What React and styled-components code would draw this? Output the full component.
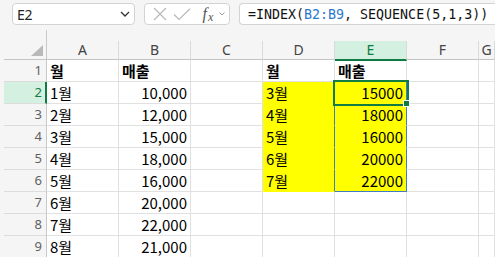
import React from 'react';
import styled, { createGlobalStyle, css } from 'styled-components';

const GREEN = '#107c41';
const SPILL = '#3f7cc4';
const YELLOW = '#ffff00';
const GRID = '#e1e1e1';

const GlobalStyle = createGlobalStyle`
  html, body { margin: 0; padding: 0; background: #f5f5f5; }
  body { font-family: "Noto Sans", sans-serif; }
`;

const columns = ['A', 'B', 'C', 'D', 'E', 'F', 'G'];

const source = [
  ['1월', '10,000'], ['2월', '12,000'], ['3월', '15,000'], ['4월', '18,000'],
  ['5월', '16,000'], ['6월', '20,000'], ['7월', '22,000'], ['8월', '21,000'],
];

const spill = [['3월', '15000'], ['4월', '18000'], ['5월', '16000'], ['6월', '20000'], ['7월', '22000']];

const App = () => {
  const rows = [];
  rows.push({ A: { v: '월', bold: true }, B: { v: '매출', bold: true }, D: { v: '월', bold: true }, E: { v: '매출', bold: true } });
  source.forEach(([m, s], i) => {
    const r = { A: { v: m }, B: { v: s, num: true } };
    if (spill[i]) {
      r.D = { v: spill[i][0], fill: YELLOW, edge: true };
      r.E = { v: spill[i][1], num: true, fill: YELLOW, edge: true, last: i === spill.length - 1, active: i === 0 };
    }
    rows.push(r);
  });

  return (
    <Window>
      <GlobalStyle />
      <Toolbar>
        <NameBox>
          <span>E2</span>
          <svg width="10" height="6" viewBox="0 0 10 6">
            <polyline points="1,1 5,5 9,1" fill="none" stroke="#333" strokeWidth="1.3" />
          </svg>
        </NameBox>
        <ActionBox>
          <svg width="14" height="14" viewBox="0 0 14 14">
            <path d="M1 1 L13 13 M13 1 L1 13" stroke="#b8b8b8" strokeWidth="1.2" />
          </svg>
          <svg width="18" height="13" viewBox="0 0 18 13">
            <polyline points="1,6.5 6,11.5 17,0.8" fill="none" stroke="#b8b8b8" strokeWidth="1.2" />
          </svg>
          <Fx>
            <FxF>f</FxF><FxX>x</FxX>
          </Fx>
          <svg width="6" height="4" viewBox="0 0 6 4">
            <polyline points="0.5,0.5 3,3 5.5,0.5" fill="none" stroke="#999" strokeWidth="1" />
          </svg>
        </ActionBox>
        <FormulaBox>
          =INDEX(<Ref>B2:B9</Ref>, SEQUENCE(5,1,3))
        </FormulaBox>
      </Toolbar>

      <Sheet>
        <Corner>
          <Triangle />
        </Corner>
        {columns.map((c) => (
          <ColHead key={c}>
            <ColLabel $selected={c === 'E'}>{c}</ColLabel>
          </ColHead>
        ))}
        {rows.map((r, i) => (
          <React.Fragment key={i}>
            <RowHead $selected={i === 1}>{i + 1}</RowHead>
            {columns.map((c) => {
              const cell = r[c] || {};
              return (
                <Cell
                  key={c}
                  $num={cell.num}
                  $bold={cell.bold}
                  $fill={cell.fill}
                  $edge={cell.edge}
                  $last={cell.last}
                  $active={cell.active}
                >
                  {cell.v}
                </Cell>
              );
            })}
          </React.Fragment>
        ))}
      </Sheet>
    </Window>
  );
};

const Window = styled.div`
  width: 495px;
  height: 257px;
  overflow: hidden;
  background: #f5f5f5;
`;

const Toolbar = styled.div`
  height: 30px;
  display: flex;
  align-items: flex-start;
  padding: 3px 0 0 12px;
  box-sizing: border-box;
`;

const Box = styled.div`
  height: 22px;
  box-sizing: border-box;
  background: #fff;
  border: 1px solid #d3d3d3;
  border-radius: 4px;
  display: flex;
  align-items: center;
`;

const NameBox = styled(Box)`
  width: 123px;
  padding: 0 4px 0 4px;
  justify-content: space-between;
  font-family: "Noto Sans", sans-serif;
  font-size: 14px;
  color: #222;
  letter-spacing: -0.2px;
`;

const ActionBox = styled(Box)`
  width: 86px;
  margin-left: 9px;
  padding: 0 4px 0 8px;
  justify-content: space-between;
`;

const Fx = styled.span`
  display: flex;
  align-items: baseline;
  font-family: "Liberation Serif", serif;
  font-style: italic;
  color: #555;
  line-height: 1;
  margin-left: 6px;
`;

const FxF = styled.span`
  font-size: 16px;
`;

const FxX = styled.span`
  font-size: 12px;
  margin-left: 1px;
  position: relative;
  top: 2px;
`;

const FormulaBox = styled(Box)`
  flex: 1;
  margin-left: 9px;
  border-right: none;
  border-radius: 4px 0 0 4px;
  padding-left: 8px;
  font-family: "DejaVu Sans Mono", monospace;
  font-size: 13.3px;
  color: #111;
  white-space: pre;
`;

const Ref = styled.span`
  color: #2b78d0;
`;

const Sheet = styled.div`
  margin-left: 4px;
  display: grid;
  grid-template-columns: 43px repeat(6, 72px) 1fr;
  grid-template-rows: 30px repeat(9, 22px);
  background: #fff;
`;

const Corner = styled.div`
  background: #f5f5f5;
  border-right: 1px solid #c8c8c8;
  border-bottom: 1px solid #c4c4c4;
  display: flex;
  justify-content: flex-end;
  align-items: flex-end;
  padding: 0 3px 3px 0;
`;

const Triangle = styled.div`
  width: 12px;
  height: 11px;
  background: #b9b9b9;
  clip-path: polygon(100% 0, 100% 100%, 0 100%);
`;

const ColHead = styled.div`
  background: #f5f5f5;
  display: flex;
  align-items: flex-end;
`;

const ColLabel = styled.div`
  flex: 1;
  height: 19px;
  box-sizing: border-box;
  border-right: 1px solid #dadada;
  border-bottom: 1px solid #c4c4c4;
  text-align: center;
  font-size: 14px;
  line-height: 18px;
  color: #444;
  ${(p) => p.$selected && css`
    background: #d3f0e0;
    color: ${GREEN};
    border-bottom: 2px solid ${GREEN};
    height: 20px;
    margin-bottom: -1px;
    position: relative;
    z-index: 2;
  `}
`;

const RowHead = styled.div`
  background: #f5f5f5;
  border-right: 1px solid #c8c8c8;
  border-bottom: 1px solid #dcdcdc;
  text-align: right;
  padding-right: 4px;
  font-size: 13px;
  line-height: 21px;
  color: #616161;
  ${(p) => p.$selected && css`
    background: #d3f0e0;
    color: ${GREEN};
    border-right: 2px solid ${GREEN};
    padding-right: 3px;
  `}
`;

const Cell = styled.div`
  position: relative;
  border-right: 1px solid ${GRID};
  border-bottom: 1px solid ${GRID};
  font-family: "Noto Sans CJK KR", "Noto Sans", sans-serif;
  font-size: 15px;
  line-height: 21px;
  color: #000;
  white-space: nowrap;
  padding: 0 3px;
  text-align: ${(p) => (p.$num ? 'right' : 'left')};
  font-weight: ${(p) => (p.$bold ? 700 : 400)};
  ${(p) => p.$fill && css`
    background: ${p.$fill};
    border-color: ${p.$fill};
  `}
  ${(p) => p.$edge && css`
    border-right-color: ${SPILL};
  `}
  ${(p) => p.$last && css`
    border-bottom-color: ${SPILL};
  `}
  ${(p) => p.$active && css`
    z-index: 1;
    box-shadow: 0 0 0 2px ${GREEN};
    &::after {
      content: '';
      position: absolute;
      right: -4px;
      bottom: -4px;
      width: 5px;
      height: 5px;
      background: ${GREEN};
      border: 1px solid #fff;
    }
  `}
`;

export default App;
